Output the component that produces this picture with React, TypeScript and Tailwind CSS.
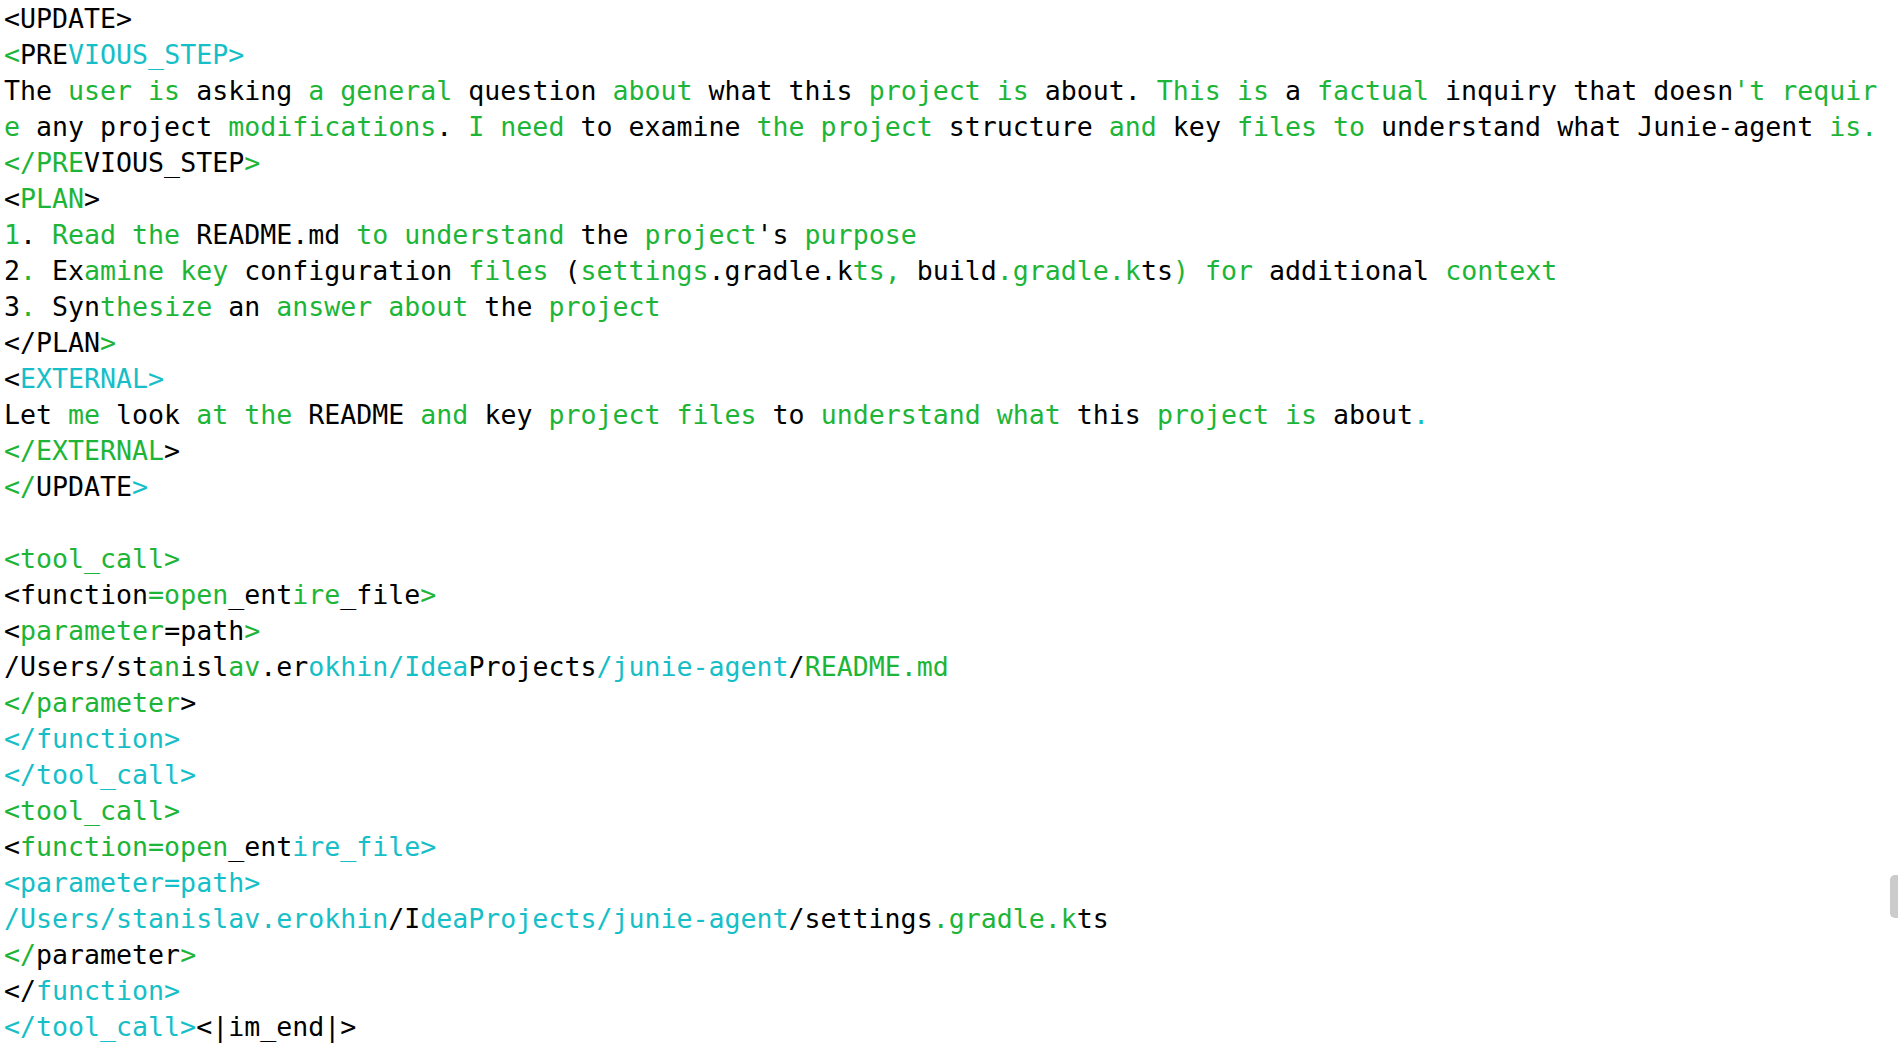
type Seg = [string, 'k' | 'g' | 'c'];

const colorClass = {
  k: 'text-black',
  g: 'text-[#1db537]',
  c: 'text-[#16bfc7]',
};

const lines: Seg[][] = [
  [['<UPDATE>', 'k']],
  [['<', 'g'], ['PRE', 'k'], ['VIOUS_STEP>', 'c']],
  [
    ['The ', 'k'], ['user is', 'g'], [' asking ', 'k'], ['a general', 'g'], [' question ', 'k'],
    ['about', 'g'], [' what this ', 'k'], ['project is', 'g'], [' about. ', 'k'], ['This is', 'g'],
    [' a ', 'k'], ['factual', 'g'], [' inquiry that doesn', 'k'], ["'t requir", 'g'],
  ],
  [
    ['e', 'g'], [' any project ', 'k'], ['modifications', 'g'], ['. ', 'k'], ['I need', 'g'],
    [' to examine ', 'k'], ['the project', 'g'], [' structure ', 'k'], ['and', 'g'], [' key ', 'k'],
    ['files to', 'g'], [' understand what Junie-agent ', 'k'], ['is.', 'g'],
  ],
  [['</PRE', 'g'], ['VIOUS_STEP', 'k'], ['>', 'g']],
  [['<', 'k'], ['PLAN', 'g'], ['>', 'k']],
  [
    ['1', 'g'], ['. ', 'k'], ['Read the', 'g'], [' README.md ', 'k'], ['to understand', 'g'],
    [' the ', 'k'], ['project', 'g'], ["'s ", 'k'], ['purpose', 'g'],
  ],
  [
    ['2', 'k'], ['. ', 'g'], ['Ex', 'k'], ['amine key', 'g'], [' configuration ', 'k'], ['files', 'g'],
    [' (', 'k'], ['settings', 'g'], ['.gradle.k', 'k'], ['ts,', 'g'], [' build', 'k'],
    ['.gradle.k', 'g'], ['ts', 'k'], [')', 'g'], [' for', 'g'], [' additional ', 'k'], ['context', 'g'],
  ],
  [
    ['3', 'k'], ['. ', 'g'], ['Syn', 'k'], ['thesize', 'g'], [' an ', 'k'], ['answer about', 'g'],
    [' the ', 'k'], ['project', 'g'],
  ],
  [['</PLAN', 'k'], ['>', 'g']],
  [['<', 'k'], ['EXTERNAL>', 'c']],
  [
    ['Let ', 'k'], ['me', 'g'], [' look ', 'k'], ['at the', 'g'], [' README ', 'k'], ['and', 'g'],
    [' key ', 'k'], ['project files', 'g'], [' to ', 'k'], ['understand what', 'g'], [' this ', 'k'],
    ['project is', 'g'], [' about', 'k'], ['.', 'c'],
  ],
  [['</EXTERNAL', 'g'], ['>', 'k']],
  [['</', 'g'], ['UPDATE', 'k'], ['>', 'c']],
  [],
  [['<tool_call>', 'g']],
  [['<function', 'k'], ['=open', 'g'], ['_ent', 'k'], ['ire', 'g'], ['_file', 'k'], ['>', 'g']],
  [['<', 'k'], ['parameter', 'g'], ['=path', 'k'], ['>', 'g']],
  [
    ['/Users/st', 'k'], ['an', 'g'], ['isl', 'k'], ['av', 'g'], ['.er', 'k'], ['okhin/Idea', 'c'],
    ['Projects', 'k'], ['/junie-agent', 'c'], ['/', 'k'], ['README.md', 'g'],
  ],
  [['</parameter', 'g'], ['>', 'k']],
  [['</function>', 'c']],
  [['</tool_call>', 'c']],
  [['<tool_call>', 'g']],
  [['<', 'k'], ['function=open', 'g'], ['_ent', 'k'], ['ire_file>', 'c']],
  [['<parameter=path>', 'c']],
  [
    ['/Users/stanislav.erokhin', 'c'], ['/I', 'k'], ['deaProjects/junie-agent', 'c'],
    ['/settings', 'k'], ['.gradle.k', 'g'], ['ts', 'k'],
  ],
  [['</', 'g'], ['parameter', 'k'], ['>', 'g']],
  [['</', 'k'], ['function>', 'c']],
  [['</tool_call>', 'c'], ['<|im_end|>', 'k']],
];

export default function App() {
  return (
    <div className="relative h-[1050px] w-[1898px] overflow-hidden bg-white">
      <div className="pl-[4px] pt-[1px] font-['DejaVu_Sans_Mono','Liberation_Mono',monospace] text-[26.6px] leading-[36px] whitespace-pre">
        {lines.map((line, i) => (
          <div key={i} className="h-[36px]">
            {line.map(([text, col], j) => (
              <span key={j} className={colorClass[col]}>
                {text}
              </span>
            ))}
          </div>
        ))}
      </div>

      {/* scrollbar thumb */}
      <div className="absolute right-0 top-[875px] h-[43px] w-[8px] rounded-l-[5px] bg-[#cbcbcb]" />
    </div>
  );
}
